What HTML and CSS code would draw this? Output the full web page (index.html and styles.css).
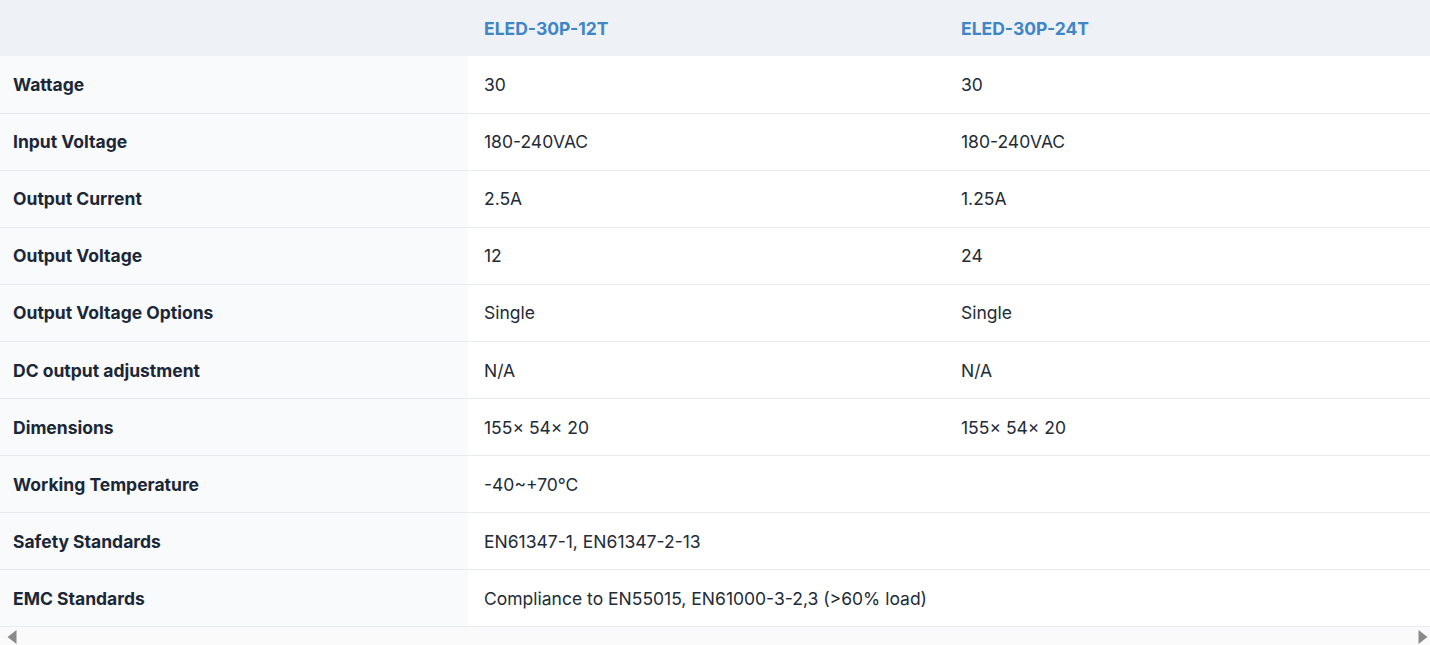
FILE: index.html
```html
<!DOCTYPE html>
<html lang="en">
<head>
<meta charset="utf-8">
<title>ELED-30P specifications</title>
<link rel="stylesheet" href="styles.css">
</head>
<body>
<div class="wrap">
  <div class="scroller">
    <table class="specs">
      <colgroup>
        <col class="c-label">
        <col class="c-a">
        <col class="c-b">
      </colgroup>
      <thead>
        <tr>
          <th></th>
          <th>ELED-30P-12T</th>
          <th>ELED-30P-24T</th>
        </tr>
      </thead>
      <tbody>
        <tr><th>Wattage</th><td>30</td><td>30</td></tr>
        <tr><th>Input Voltage</th><td>180-240VAC</td><td>180-240VAC</td></tr>
        <tr><th>Output Current</th><td>2.5A</td><td>1.25A</td></tr>
        <tr><th>Output Voltage</th><td>12</td><td>24</td></tr>
        <tr><th>Output Voltage Options</th><td>Single</td><td>Single</td></tr>
        <tr><th>DC output adjustment</th><td>N/A</td><td>N/A</td></tr>
        <tr><th>Dimensions</th><td>155× 54× 20</td><td>155× 54× 20</td></tr>
        <tr><th>Working Temperature</th><td colspan="2">-40~+70°C</td></tr>
        <tr><th>Safety Standards</th><td colspan="2">EN61347-1, EN61347-2-13</td></tr>
        <tr><th>EMC Standards</th><td colspan="2">Compliance to EN55015, EN61000-3-2,3 (&gt;60% load)</td></tr>
      </tbody>
    </table>
  </div>
  <div class="hbar">
    <svg class="arrow" width="10" height="14" viewBox="0 0 10 14"><polygon points="9.5,0 9.5,14 0.5,7" fill="#8a8a8a"/></svg>
    <svg class="arrow" width="10" height="14" viewBox="0 0 10 14"><polygon points="0.5,0 0.5,14 9.5,7" fill="#8a8a8a"/></svg>
  </div>
</div>
</body>
</html>
```

FILE: styles.css
```css
html, body {
  margin: 0;
  padding: 0;
  background: #ffffff;
}

body {
  font-family: Inter, "Noto Sans", "Liberation Sans", sans-serif;
  color: #1e2a38;
}

.wrap {
  display: flex;
  flex-direction: column;
  width: 1430px;
  height: 645px;
}

.scroller {
  overflow: hidden;
}

.specs {
  width: 1430px;
  table-layout: fixed;
  border-collapse: collapse;
  font-size: 17.5px;
}

.c-label { width: 468px; }
.c-a { width: 477px; }
.c-b { width: auto; }

.specs thead th {
  height: 56px;
  background: #eef1f6;
  text-align: left;
  padding: 0 16px;
  font-weight: 700;
  color: #3f86c6;
  vertical-align: middle;
}

.specs tbody tr {
  height: 57.1px;
  border-bottom: 1px solid #e7eaee;
}

.specs tbody th {
  background: #f8fafc;
  text-align: left;
  font-weight: 700;
  padding: 0 13px;
  color: #1b2736;
  vertical-align: middle;
}

.specs tbody td {
  padding: 0 16px;
  color: #222b36;
  vertical-align: middle;
  background: #ffffff;
}

.hbar {
  flex: 1;
  display: flex;
  justify-content: space-between;
  align-items: flex-end;
  padding: 0 2px 1px 7px;
  background: #fafafa;
}

.arrow {
  display: block;
}
```
